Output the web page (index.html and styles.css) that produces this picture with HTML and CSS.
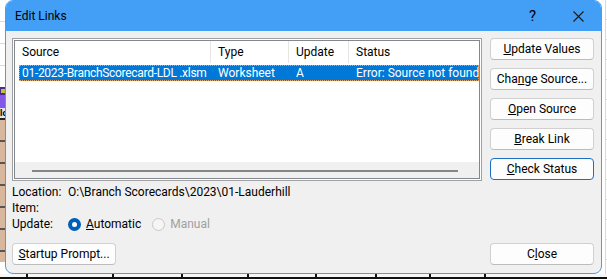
FILE: index.html
```html
<!DOCTYPE html>
<html lang="en">
<head>
    <meta charset="UTF-8">
    <title>Edit Links</title>
    <link rel="stylesheet" href="styles.css">
</head>
<body>

    <div class="screen">
        <!-- spreadsheet peeking out behind the dialog -->
        <div class="sheet-left">
            <div class="cell-plain"></div>
            <div class="cell-dark"><span class="mark"></span></div>
            <div class="cell-purple"></div>
            <div class="cell-head">lo</div>
            <div class="cell-tan"></div>
            <div class="cell-plain-low"></div>
        </div>

        <div class="dialog">
            <div class="titlebar">
                <span class="title">Edit Links</span>
                <span class="tb-btn help">?</span>
                <span class="tb-btn close-x">
                    <svg width="11" height="11" viewBox="0 0 11 11">
                        <path d="M0.5 0.5 L10.5 10.5 M10.5 0.5 L0.5 10.5" stroke="#1a1a1a" stroke-width="1.1" fill="none"/>
                    </svg>
                </span>
            </div>

            <div class="dialog-body">
                <div class="main">
                    <div class="left-col">
                        <div class="listview">
                            <div class="list-inner">
                                <div class="list-header">
                                    <div class="col">Source</div>
                                    <div class="col">Type</div>
                                    <div class="col">Update</div>
                                    <div class="col">Status</div>
                                </div>
                                <div class="list-row selected">
                                    <div class="col file">01-2023-BranchScorecard-LDL .xlsm</div>
                                    <div class="col">Worksheet</div>
                                    <div class="col">A</div>
                                    <div class="col">Error: Source not found</div>
                                </div>
                                <div class="list-empty"></div>
                                <div class="hscroll"><div class="thumb"></div></div>
                            </div>
                        </div>

                        <div class="info">
                            <div class="info-line">
                                <span class="info-label">Location:</span>
                                <span>O:\Branch Scorecards\2023\01-Lauderhill</span>
                            </div>
                            <div class="info-line">
                                <span class="info-label">Item:</span>
                            </div>
                            <div class="info-line">
                                <span class="info-label">Update:</span>
                                <span class="radio checked"></span>
                                <span class="radio-label"><u>A</u>utomatic</span>
                                <span class="radio disabled"></span>
                                <span class="radio-label disabled">Manual</span>
                            </div>
                        </div>
                    </div>

                    <div class="buttons">
                        <button class="btn"><u>U</u>pdate Values</button>
                        <button class="btn">Cha<u>n</u>ge Source...</button>
                        <button class="btn"><u>O</u>pen Source</button>
                        <button class="btn"><u>B</u>reak Link</button>
                        <button class="btn default"><u>C</u>heck Status</button>
                    </div>
                </div>

                <div class="footer">
                    <button class="btn"><u>S</u>tartup Prompt...</button>
                    <button class="btn">C<u>l</u>ose</button>
                </div>
            </div>
        </div>

        <div class="sheet-right"></div>
    </div>

    <div class="sheet-bottom">
        <span class="tick" style="left: 26px"></span>
        <span class="tick" style="left: 112px"></span>
        <span class="tick" style="left: 181px"></span>
        <span class="tick" style="left: 247px"></span>
        <span class="tick" style="left: 315px"></span>
        <span class="tick" style="left: 375px"></span>
        <span class="tick" style="left: 429px"></span>
        <span class="tick" style="left: 484px"></span>
    </div>

</body>
</html>
```

FILE: styles.css
```css
/* General */
* {
    margin: 0;
    padding: 0;
    box-sizing: border-box;
}

body {
    width: 607px;
    height: 279px;
    overflow: hidden;
    background-color: #fff;
    font-family: "Segoe UI", Roboto, sans-serif;
    font-size: 12px;
    color: #000;
}

.screen {
    display: flex;
    height: 274px;
}

/* Sheet behind */
.sheet-left {
    width: 5px;
    display: flex;
    flex-direction: column;
    overflow: hidden;
}

.cell-plain {
    height: 87px;
    background: repeating-linear-gradient(to bottom, #fff 0 21px, #dadada 21px 22px);
}

.cell-dark {
    height: 8px;
    background-color: #4f2a86;
    position: relative;
}

.cell-dark .mark {
    position: absolute;
    left: 1px;
    top: 2px;
    width: 4px;
    height: 4px;
    background-color: #b9c43a;
}

.cell-purple {
    height: 13px;
    background-color: #8259e8;
}

.cell-head {
    height: 12px;
    background-color: #e6e6e6;
    border-bottom: 2px solid #222;
    font-size: 9px;
    font-weight: bold;
    line-height: 10px;
    white-space: nowrap;
}

.cell-tan {
    height: 142px;
    background: repeating-linear-gradient(to bottom, #d8b79c 0 20px, #555 20px 22px);
}

.cell-plain-low {
    flex: 1;
    background-color: #fff;
}

.sheet-right {
    flex: 1;
    border-left: 3px solid #fff;
    background: repeating-linear-gradient(to bottom, #fff 0 19px, #dadada 19px 20px);
    box-shadow: inset 1px 0 0 #dadada;
}

.sheet-bottom {
    position: relative;
    height: 5px;
    background-color: #f6f6f6;
    border-bottom: 2px solid #111;
}

.tick {
    position: absolute;
    top: 0;
    bottom: 0;
    width: 2px;
    background-color: #111;
}

/* Dialog window */
.dialog {
    width: 597px;
    height: 274px;
    border: 1px solid #439ef6;
    border-radius: 8px;
    background-color: #f0f0f0;
    display: flex;
    flex-direction: column;
    overflow: hidden;
}

.titlebar {
    height: 30px;
    background-color: #439ef6;
    display: flex;
    align-items: center;
    padding-left: 9px;
}

.title {
    flex: 1;
    font-size: 12px;
}

.tb-btn {
    height: 30px;
    display: flex;
    align-items: center;
    justify-content: center;
}

.help {
    width: 45px;
    font-size: 15px;
    padding-bottom: 1px;
}

.close-x {
    width: 46px;
}

.dialog-body {
    flex: 1;
    display: flex;
    flex-direction: column;
    padding: 7px 7px 8px 6px;
}

.main {
    display: flex;
    gap: 8px;
}

.left-col {
    width: 470px;
}

/* List view */
.listview {
    height: 143px;
    border: 1px solid #a0a0a0;
    padding: 1px;
    background-color: #fff;
}

.list-inner {
    height: 100%;
    border: 1px solid #828790;
    display: flex;
    flex-direction: column;
    overflow: hidden;
}

.list-header {
    height: 22px;
    display: grid;
    grid-template-columns: 196px 78px 60px 1fr;
    margin-bottom: 2px;
}

.list-header .col {
    padding-left: 7px;
    line-height: 22px;
    border-right: 1px solid #e5e5e5;
}

.list-header .col:last-child {
    border-right: none;
}

.list-row {
    height: 16px;
    margin-left: 4px;
    display: grid;
    grid-template-columns: 192px 78px 60px 1fr;
    line-height: 16px;
    white-space: nowrap;
}

.list-row .col {
    padding-left: 7px;
    overflow: hidden;
}

.list-row .col.file {
    padding-left: 3px;
    letter-spacing: -0.3px;
}

.list-row.selected {
    background-color: #0078d7;
    color: #fff;
    outline: 1px dotted #e8a060;
    outline-offset: -1px;
}

.list-empty {
    flex: 1;
}

.hscroll {
    height: 16px;
    background-color: #f0f0f0;
    padding: 8px 21px 0 17px;
}

.hscroll .thumb {
    height: 2px;
    background-color: #868686;
}

/* Info lines */
.info {
    margin-top: 3px;
}

.info-line {
    height: 16px;
    display: flex;
    align-items: center;
    white-space: nowrap;
}

.info-label {
    width: 56px;
}

.radio {
    width: 13px;
    height: 13px;
    border-radius: 50%;
    margin-right: 5px;
    display: inline-block;
}

.radio.checked {
    background-color: #005fb8;
    position: relative;
}

.radio.checked::after {
    content: "";
    position: absolute;
    left: 4px;
    top: 4px;
    width: 5px;
    height: 5px;
    border-radius: 50%;
    background-color: #fff;
}

.radio.disabled {
    border: 1px solid #c8c8c8;
    background-color: #f5f5f5;
    margin-left: 11px;
}

.radio-label.disabled {
    color: #a0a0a0;
}

/* Buttons */
.buttons {
    width: 104px;
    display: flex;
    flex-direction: column;
    gap: 8px;
}

.btn {
    height: 22px;
    width: 104px;
    font-family: inherit;
    font-size: 12px;
    color: #000;
    background-color: #fdfdfd;
    border: 1px solid #d0d0d0;
    border-bottom-color: #bcbcbc;
    border-radius: 4px;
    cursor: pointer;
}

.btn.default {
    border-color: #1a6fc4;
}

.footer {
    margin-top: auto;
    display: flex;
    justify-content: space-between;
}
```
